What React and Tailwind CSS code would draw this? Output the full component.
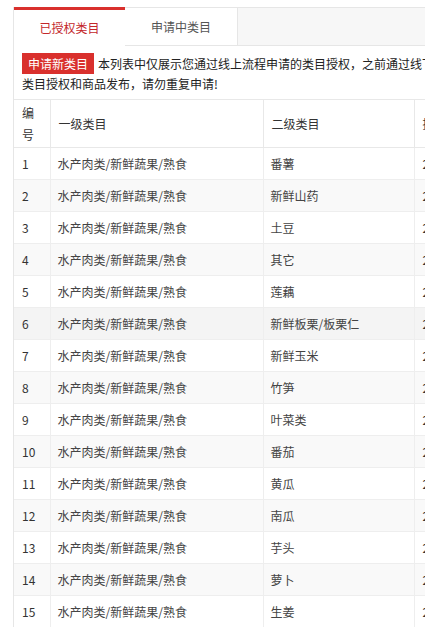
const rows = [
  '番薯',
  '新鲜山药',
  '土豆',
  '其它',
  '莲藕',
  '新鲜板栗/板栗仁',
  '新鲜玉米',
  '竹笋',
  '叶菜类',
  '番茄',
  '黄瓜',
  '南瓜',
  '芋头',
  '萝卜',
  '生姜'
];

export default function App() {
  return (
    <div className="w-[425px] h-[627px] overflow-hidden bg-white text-[12px] text-[#333] font-['Noto_Sans_CJK_SC',sans-serif]">
      <div className="pt-[7px] pl-[13px]">
        <div className="w-[640px] border-l border-t border-[#e6e6e6]">
          <div className="flex h-[38px]">
            <div className="w-[111px] border-t-[3px] border-[#d9302d] -mt-px flex items-center justify-center text-[#c3272b]">
              已授权类目
            </div>
            <div className="w-[113px] border-r border-b border-[#e6e6e6] flex items-center justify-center text-[#555]">
              申请中类目
            </div>
            <div className="flex-1 bg-[#f7f7f7] border-b border-[#e6e6e6]"></div>
          </div>

          <div className="pl-[8px] pt-[7px] w-[490px]">
            <p className="leading-[20px] text-[#222]">
              <span className="inline-block bg-[#d9302d] text-white px-[6px] py-px leading-[19px] mr-[4px]">申请新类目</span>
              本列表中仅展示您通过线上流程申请的类目授权，之前通过线下流程申请的类目授权和商品发布，请勿重复申请!
            </p>
          </div>

          <table className="mt-[5px] w-[560px] border-collapse table-fixed">
            <colgroup>
              <col className="w-[36px]" />
              <col className="w-[213px]" />
              <col className="w-[151px]" />
              <col />
            </colgroup>
            <thead>
              <tr className="h-[48px] border-t border-b border-[#e8e8e8]">
                <th className="px-[8px] font-normal text-left leading-[22px] border-r border-[#e8e8e8]">编号</th>
                <th className="px-[8px] font-normal text-left border-r border-[#e8e8e8]">一级类目</th>
                <th className="px-[8px] font-normal text-left border-r border-[#e8e8e8]">二级类目</th>
                <th className="px-[8px] font-normal text-left">授权时间</th>
              </tr>
            </thead>
            <tbody>
              {rows.map((name, index) => (
                <tr
                  key={name}
                  className={`h-[32px] border-b border-[#eeeeee] ${
                    index === 5 ? 'bg-[#f4f4f4]' : index % 2 === 1 ? 'bg-[#f9f9f9]' : 'bg-white'
                  }`}
                >
                  <td className="px-[8px] border-r border-[#eeeeee]">{index + 1}</td>
                  <td className="px-[7px] border-r border-[#eeeeee] text-[#444]">水产肉类/新鲜蔬果/熟食</td>
                  <td className="px-[7px] border-r border-[#eeeeee] text-[#444]">{name}</td>
                  <td className="px-[8px]">2018-05-21</td>
                </tr>
              ))}
            </tbody>
          </table>
        </div>
      </div>
    </div>
  );
}
